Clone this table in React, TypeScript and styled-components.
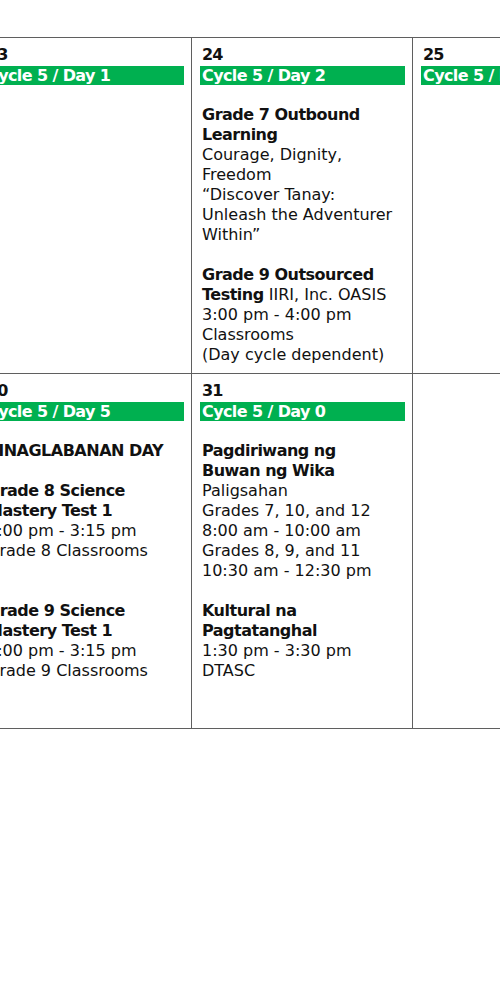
import React from "react";
import styled, { createGlobalStyle } from "styled-components";

const Global = createGlobalStyle`
  html, body { margin: 0; padding: 0; background: #ffffff; }
  body { font-family: "DejaVu Sans", "Liberation Sans", sans-serif; color: #111; }
`;

const Page = styled.div`
  width: 500px;
  height: 1000px;
  overflow: hidden;
  background: #fff;
`;

const Grid = styled.div`
  display: grid;
  grid-template-columns: 215px 221px 221px;
  grid-template-rows: 336px 355px;
  margin: 37px 0 0 -24px;
  border-top: 1px solid #5f5f5f;
  border-left: 1px solid #5f5f5f;
  width: max-content;
`;

const Cell = styled.div`
  border-right: 1px solid #5f5f5f;
  border-bottom: 1px solid #5f5f5f;
  padding: 7px 7px 0 7px;
  overflow: hidden;
  font-size: 16px;
  line-height: 20px;
`;

const DayNum = styled.div`
  font-weight: 700;
  letter-spacing: -0.8px;
  padding-left: 3px;
  height: 20px;
`;

const CycleBar = styled.div`
  margin-top: 1px;
  margin-left: 1px;
  height: 19px;
  line-height: 19px;
  background: #00b050;
  color: #fff;
  font-weight: 700;
  letter-spacing: -0.6px;
  padding-left: 2px;
  white-space: nowrap;
  overflow: hidden;
`;

const Events = styled.div`
  padding-left: 3px;
  padding-top: 20px;
`;

const Event = styled.div<{ $gap: number }>`
  margin-top: ${(p) => p.$gap}px;
  white-space: nowrap;
`;

const Line = styled.div``;

const Strong = styled.span`
  font-weight: 700;
  letter-spacing: -0.5px;
`;

type Ev = { gap: number; lines: React.ReactNode[] };
type Day = { num?: string; cycle?: string; events: Ev[] };

const days: Day[] = [
  { num: "23", cycle: "Cycle 5 / Day 1", events: [] },
  {
    num: "24",
    cycle: "Cycle 5 / Day 2",
    events: [
      {
        gap: 0,
        lines: [
          <Strong>Grade 7 Outbound</Strong>,
          <Strong>Learning</Strong>,
          "Courage, Dignity,",
          "Freedom",
          "\u201cDiscover Tanay:",
          "Unleash the Adventurer",
          "Within\u201d",
        ],
      },
      {
        gap: 20,
        lines: [
          <Strong>Grade 9 Outsourced</Strong>,
          <>
            <Strong>Testing</Strong> IIRI, Inc. OASIS
          </>,
          "3:00 pm - 4:00 pm",
          "Classrooms",
          "(Day cycle dependent)",
        ],
      },
    ],
  },
  { num: "25", cycle: "Cycle 5 / Day 3", events: [] },
  {
    num: "30",
    cycle: "Cycle 5 / Day 5",
    events: [
      { gap: 0, lines: [<Strong>PINAGLABANAN DAY</Strong>] },
      {
        gap: 20,
        lines: [
          <Strong>Grade 8 Science</Strong>,
          <Strong>Mastery Test 1</Strong>,
          "3:00 pm - 3:15 pm",
          "Grade 8 Classrooms",
        ],
      },
      {
        gap: 40,
        lines: [
          <Strong>Grade 9 Science</Strong>,
          <Strong>Mastery Test 1</Strong>,
          "3:00 pm - 3:15 pm",
          "Grade 9 Classrooms",
        ],
      },
    ],
  },
  {
    num: "31",
    cycle: "Cycle 5 / Day 0",
    events: [
      {
        gap: 0,
        lines: [
          <Strong>Pagdiriwang ng</Strong>,
          <Strong>Buwan ng Wika</Strong>,
          "Paligsahan",
          "Grades 7, 10, and 12",
          "8:00 am - 10:00 am",
          "Grades 8, 9, and 11",
          "10:30 am - 12:30 pm",
        ],
      },
      {
        gap: 20,
        lines: [
          <Strong>Kultural na</Strong>,
          <Strong>Pagtatanghal</Strong>,
          "1:30 pm - 3:30 pm",
          "DTASC",
        ],
      },
    ],
  },
  { events: [] },
];

export default function App() {
  return (
    <Page>
      <Global />
      <Grid>
        {days.map((d, i) => (
          <Cell key={i}>
            {d.num && <DayNum>{d.num}</DayNum>}
            {d.cycle && <CycleBar>{d.cycle}</CycleBar>}
            {d.events.length > 0 && (
              <Events>
                {d.events.map((e, j) => (
                  <Event key={j} $gap={e.gap}>
                    {e.lines.map((l, k) => (
                      <Line key={k}>{l}</Line>
                    ))}
                  </Event>
                ))}
              </Events>
            )}
          </Cell>
        ))}
      </Grid>
    </Page>
  );
}
